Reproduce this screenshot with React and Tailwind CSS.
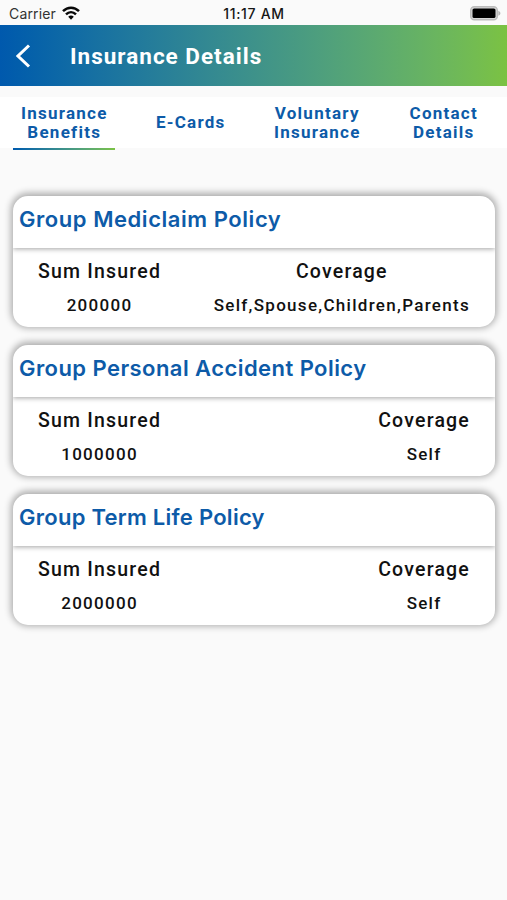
const policies = [
  { title: "Group Mediclaim Policy", sum: "200000", coverage: "Self,Spouse,Children,Parents", tracking: "tracking-[0.55px]" },
  { title: "Group Personal Accident Policy", sum: "1000000", coverage: "Self", tracking: "tracking-[0.44px]" },
  { title: "Group Term Life Policy", sum: "2000000", coverage: "Self", tracking: "tracking-[0.26px]" },
];

const tabs = [["Insurance", "Benefits"], ["E-Cards"], ["Voluntary", "Insurance"], ["Contact", "Details"]];

function StatusBar() {
  return (
    <div className="grid h-[25px] grid-cols-3 items-center pt-[3px] pr-[6px] pl-[9px] font-[Inter,sans-serif] text-[14px] leading-none text-[#161616]">
      <div className="flex items-center gap-[6px]">
        <span className="tracking-[0.15px] text-[#333]">Carrier</span>
        <svg className="mb-[2px]" width="18" height="14" viewBox="0 0 18 14" fill="none" stroke="#080808" strokeWidth="2.5">
          <path d="M1 5.2C5.7.6 12.3.6 17 5.2" />
          <path d="M4 8.4c3-2.9 7-2.9 10 0" />
          <path d="M6.2 10.7c1.7-1.6 3.9-1.6 5.6 0L9 13.7Z" fill="#080808" stroke="none" />
        </svg>
      </div>
      <span className="-ml-[2px] text-center font-medium tracking-[0.7px] whitespace-nowrap">11:17 AM</span>
      <svg className="mb-[2px] justify-self-end" width="31" height="15" viewBox="0 0 31 15">
        <rect x="0.7" y="0.7" width="26.6" height="13.1" rx="3.6" fill="#d8d8d8" stroke="#bcbcbc" strokeWidth="1.4" />
        <rect x="2.5" y="2.5" width="23" height="9.5" rx="1.6" fill="#000" />
        <path d="M28.3 4.7c2.8 1.3 2.8 3.8 0 5.1Z" fill="#b5b5b5" />
      </svg>
    </div>
  );
}

function Column({ label, value }) {
  return (
    <div className="flex flex-col items-center text-[#111]">
      <div className="text-[19.5px] leading-[24px] font-medium tracking-[1.2px]">{label}</div>
      <div className="mt-[9px] text-[17px] leading-[24px] font-medium tracking-[1.3px]">{value}</div>
    </div>
  );
}

function PolicyCard({ policy }) {
  return (
    <section className="h-[131px] overflow-hidden rounded-[15px] bg-white shadow-[0_-1px_7px_2px_rgba(0,0,0,0.32)]">
      <h2 className={`h-[52px] pt-[7px] pl-[6px] font-[Inter,sans-serif] text-[22px] leading-[32px] font-semibold whitespace-nowrap text-[#0d5ba8] shadow-[0_1px_5px_rgba(0,0,0,0.36)] ${policy.tracking}`}>
        {policy.title}
      </h2>
      <div className="flex justify-between pt-[12px] pr-[25px] pl-[25px]">
        <Column label="Sum Insured" value={policy.sum} />
        <Column label="Coverage" value={policy.coverage} />
      </div>
    </section>
  );
}

export default function App() {
  return (
    <div className="h-[900px] w-full overflow-hidden bg-[#fafafa] font-[Roboto,sans-serif]">
      <StatusBar />
      <header className="flex h-[61px] items-center bg-linear-to-r from-[#0059ad] to-[#7bc242] pl-[16px] text-white">
        <svg width="15" height="24" viewBox="0 0 15 24" fill="none" stroke="white" strokeWidth="3">
          <path d="M13 1.5 2 12l11 10.5" />
        </svg>
        <h1 className="ml-[39px] pt-[2px] text-[22.5px] leading-none font-bold tracking-[1px]">Insurance Details</h1>
      </header>
      <nav className="mt-[11px] grid h-[51px] grid-cols-4 bg-white pl-[1px] text-center text-[17px] leading-[19.5px] font-bold tracking-[1.25px] text-[#0d5ba8]">
        {tabs.map((lines, i) => (
          <div key={lines.join(" ")} className="flex flex-col items-center">
            <div className="flex h-[51px] shrink-0 flex-col justify-center pt-[1px]">
              {lines.map((line) => <span key={line}>{line}</span>)}
            </div>
            {i === 0 && <div className="h-[2px] w-[102px] shrink-0 bg-linear-to-r from-[#0059ad] to-[#7bc242]" />}
          </div>
        ))}
      </nav>
      <main className="flex flex-col gap-[18px] pt-[48px] pr-[12px] pl-[13px]">
        {policies.map((policy) => <PolicyCard key={policy.title} policy={policy} />)}
      </main>
    </div>
  );
}
